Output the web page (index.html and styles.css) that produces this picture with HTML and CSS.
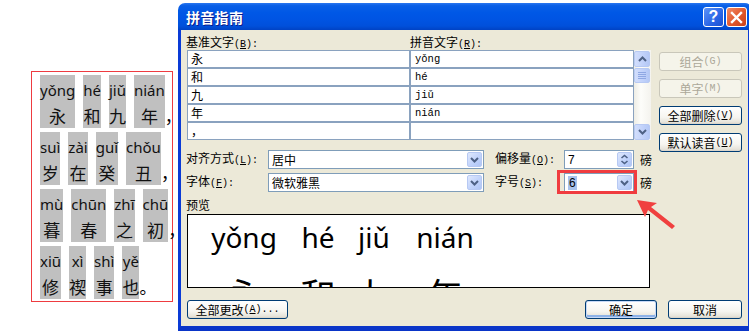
FILE: index.html
```html
<!DOCTYPE html>
<html lang="zh-CN">
<head>
<meta charset="utf-8">
<title>拼音指南</title>
<link rel="stylesheet" href="styles.css">
</head>
<body>
<div class="desk">
  <div class="docpane">
    <div class="doc">
      <div class="line">
        <span class="rb"><span class="py">yǒng</span><span class="hz">永</span></span>
        <span class="rb"><span class="py">hé</span><span class="hz">和</span></span>
        <span class="rb"><span class="py">jiǔ</span><span class="hz">九</span></span>
        <span class="rb"><span class="py">nián</span><span class="hz">年</span></span>
        <span class="pu">，</span>
      </div>
      <div class="line">
        <span class="rb"><span class="py">suì</span><span class="hz">岁</span></span>
        <span class="rb"><span class="py">zài</span><span class="hz">在</span></span>
        <span class="rb"><span class="py">guǐ</span><span class="hz">癸</span></span>
        <span class="rb"><span class="py">chǒu</span><span class="hz">丑</span></span>
        <span class="pu">，</span>
      </div>
      <div class="line">
        <span class="rb"><span class="py">mù</span><span class="hz">暮</span></span>
        <span class="rb"><span class="py">chūn</span><span class="hz">春</span></span>
        <span class="rb"><span class="py">zhī</span><span class="hz">之</span></span>
        <span class="rb"><span class="py">chū</span><span class="hz">初</span></span>
        <span class="pu">，</span>
      </div>
      <div class="line">
        <span class="rb"><span class="py">xiū</span><span class="hz">修</span></span>
        <span class="rb"><span class="py">xì</span><span class="hz">禊</span></span>
        <span class="rb"><span class="py">shì</span><span class="hz">事</span></span>
        <span class="rb"><span class="py">yě</span><span class="hz">也</span></span>
        <span class="pu">。</span>
      </div>
    </div>
  </div>

  <div class="win">
    <div class="titlebar">
      <span class="title">拼音指南</span>
      <span class="tbtns">
        <span class="tb help">?</span>
        <span class="tb close"><svg width="13" height="13" viewBox="0 0 13 13"><path d="M2 2 L11 11 M11 2 L2 11" stroke="#fff" stroke-width="2.4" stroke-linecap="square"/></svg></span>
      </span>
    </div>
    <div class="client">
      <div class="top">
        <div class="left">
          <div class="heads">
            <span class="h1">基准文字<span class="k">(<u>B</u>):</span></span>
            <span>拼音文字<span class="k">(<u>R</u>):</span></span>
          </div>
          <div class="list">
            <div class="grid">
              <div class="cell">永</div><div class="cell mono">yǒng</div>
              <div class="cell">和</div><div class="cell mono">hé</div>
              <div class="cell">九</div><div class="cell mono">jiǔ</div>
              <div class="cell">年</div><div class="cell mono">nián</div>
              <div class="cell">，</div><div class="cell mono"></div>
            </div>
            <div class="vs">
              <span class="sbtn"><svg width="9" height="6" viewBox="0 0 9 6"><path d="M1 5 L4.5 1.5 L8 5" fill="none" stroke="#4d6185" stroke-width="2"/></svg></span>
              <span class="sbtn thumb"><svg width="8" height="8" viewBox="0 0 8 8"><path d="M0 0.5 H8 M0 2.5 H8 M0 4.5 H8 M0 6.5 H8" stroke="#8ea7e3" stroke-width="1"/></svg></span>
              <span class="sfill"></span>
              <span class="sbtn"><svg width="9" height="6" viewBox="0 0 9 6"><path d="M1 1 L4.5 4.5 L8 1" fill="none" stroke="#4d6185" stroke-width="2"/></svg></span>
            </div>
          </div>
        </div>
        <div class="side">
          <span class="btn dis">组合<span class="k">(G)</span></span>
          <span class="btn dis">单字<span class="k">(M)</span></span>
          <span class="btn">全部删除<span class="k">(<u>V</u>)</span></span>
          <span class="btn">默认读音<span class="k">(<u>U</u>)</span></span>
        </div>
      </div>

      <div class="opts">
        <span class="lbl">对齐方式<span class="k">(<u>L</u>):</span></span>
        <span class="sel"><span>居中</span><span class="ddb"><svg width="9" height="6" viewBox="0 0 9 6"><path d="M1 1 L4.5 4.5 L8 1" fill="none" stroke="#4d6185" stroke-width="2"/></svg></span></span>
        <span class="lbl pad">偏移量<span class="k">(<u>O</u>):</span></span>
        <span class="sel num"><span>7</span><span class="ddb spin"><svg width="9" height="11" viewBox="0 0 9 11"><path d="M1.5 4 L4.5 1.5 L7.5 4 M1.5 7 L4.5 9.5 L7.5 7" fill="none" stroke="#4d6185" stroke-width="1.6"/></svg></span></span>
        <span class="unit">磅</span>

        <span class="lbl">字体<span class="k">(<u>F</u>):</span></span>
        <span class="sel"><span>微软雅黑</span><span class="ddb"><svg width="9" height="6" viewBox="0 0 9 6"><path d="M1 1 L4.5 4.5 L8 1" fill="none" stroke="#4d6185" stroke-width="2"/></svg></span></span>
        <span class="lbl pad">字号<span class="k">(<u>S</u>):</span></span>
        <span class="sel num mark"><span class="hl">6</span><span class="ddb"><svg width="9" height="6" viewBox="0 0 9 6"><path d="M1 1 L4.5 4.5 L8 1" fill="none" stroke="#4d6185" stroke-width="2"/></svg></span><span class="redbox"></span></span>
        <span class="unit">磅</span>
      </div>

      <div class="plabel">预览</div>
      <div class="preview">
        <div class="pc pc1"><span class="ppy">yǒng</span><span class="phz">永</span></div>
        <div class="pc pc2"><span class="ppy">hé</span><span class="phz">和</span></div>
        <div class="pc pc3"><span class="ppy">jiǔ</span><span class="phz">九</span></div>
        <div class="pc pc4"><span class="ppy">nián</span><span class="phz">年</span></div>
      </div>

      <div class="bottom">
        <span class="btn ball">全部更改<span class="k">(<u>A</u>)...</span></span>
        <span class="btn bok">确定</span>
        <span class="btn bcancel">取消</span>
      </div>
    </div>
  </div>

  <svg class="arrow" width="60" height="50" viewBox="0 0 60 50">
    <path d="M2 4 L22 7 L16 11 L40 30 L37 33 L13 14 L10 21 Z" fill="#f0403f"/>
  </svg>
</div>
</body>
</html>
```

FILE: styles.css
```css
* { box-sizing: border-box; margin: 0; padding: 0; }
html, body { width: 749px; height: 331px; overflow: hidden; background: #fff; }
body { font-family: "Noto Sans CJK SC", "Noto Sans", sans-serif; font-size: 12px; color: #000; }

.desk { display: flex; width: 749px; height: 331px; position: relative; }

/* document on the left */
.docpane { width: 178px; flex: none; padding: 71px 0 0 31px; }
.doc { width: 142px; height: 231px; border: 1px solid #ee3b40; padding: 3px 0 0 8px;
  display: flex; flex-direction: column; gap: 4px; }
.line { display: flex; align-items: flex-end; gap: 8px; }
.rb { display: flex; flex-direction: column; align-items: center; background: #c0c0c0;
  height: 53px; padding-top: 1px; }
.py { font-family: "Noto Sans", sans-serif; font-size: 15px; line-height: 28px; color: #111; white-space: nowrap; }
.hz { font-family: "Noto Sans CJK SC", sans-serif; font-size: 17px; line-height: 23px; color: #111; }
.pu { font-family: "Noto Sans CJK SC", sans-serif; font-size: 17px; line-height: 24px; margin-left: -8px; }

/* window */
.win { flex: none; width: 574px; height: 331px; padding-top: 3px; display: flex; flex-direction: column; }
.titlebar { height: 27px; flex: none; border-radius: 7px 7px 0 0;
  background: linear-gradient(to bottom, #2a77f0 0%, #0a5fe6 10%, #0058e6 35%, #0054e3 60%, #0050db 85%, #0042c4 100%);
  display: flex; align-items: center; justify-content: space-between; padding: 0 5px 0 8px; }
.title { color: #fff; font-weight: 700; font-size: 14px; letter-spacing: 0.3px; text-shadow: 1px 1px 0 #0a1e8c; line-height: 20px; }
.tbtns { display: flex; gap: 2px; padding-top: 1px; }
.tb { width: 21px; height: 20px; border: 1px solid #fff; border-radius: 3px; display: flex; align-items: center; justify-content: center; }
.help { background: linear-gradient(135deg, #5c93f8, #2a65e6 60%, #1c4fd0); color: #fff; font: 700 16px "Liberation Sans", sans-serif; }
.close { background: linear-gradient(135deg, #f08a66, #e2572c 55%, #c8401a); }

.client { flex: 1; background: #ece9d8; border-left: 3px solid #0a3bd6; border-right: 4px solid #0a3bd6;
  border-bottom: 5px solid #0a35c8; padding: 5px 6px 0 5px; display: flex; flex-direction: column; }

.k { font-family: "Liberation Mono", monospace; font-size: 10px; }

.top { display: flex; gap: 8px; height: 115px; flex: none; }
.left { width: 465px; display: flex; flex-direction: column; }
.heads { display: flex; height: 15px; line-height: 14px; }
.h1 { width: 224px; }
.list { display: flex; margin-left: 1px; }
.grid { display: grid; grid-template-columns: 223px 224px; grid-auto-rows: 18px; }
.cell { border: 1px solid #8aa2bf; background: #fff; padding-left: 3px; line-height: 16px; font-size: 12px; }
.cell.mono { font-family: "Liberation Mono", monospace; font-size: 10.5px; padding-left: 4px; }

.vs { width: 17px; height: 90px; display: flex; flex-direction: column; gap: 1px; padding: 1px 1px 0 0;
  background: linear-gradient(to right, #eeede5, #fdfdfa 40%, #f4f3ee); }
.sbtn { height: 16px; flex: none; border: 1px solid #b7c9f3; border-radius: 2px;
  background: linear-gradient(to right, #d2defb, #c3d3fb 50%, #b4c8f6); display: flex; align-items: center; justify-content: center; }
.thumb { height: 15px; }
.sfill { flex: 1; }

.side { width: 83px; display: flex; flex-direction: column; gap: 8px; padding-top: 17px; }
.btn { height: 19px; border: 1px solid #003c74; border-radius: 3px; display: flex; align-items: center; justify-content: center;
  background: linear-gradient(to bottom, #ffffff 0%, #f6f5f0 60%, #e6e3da 90%, #d6d0c5 100%); font-size: 12px; line-height: 17px; white-space: nowrap; }
.btn.dis { border-color: #c9c7ba; color: #aca899; background: #f5f4ea; }

.opts { display: grid; grid-template-columns: 82px 216px 80px 70px auto; grid-template-rows: 19px 19px; row-gap: 4px; align-items: center; flex: none; }
.lbl { line-height: 16px; }
.lbl.pad { padding-left: 11px; }
.sel { height: 19px; border: 1px solid #7f9db9; background: #fff; display: flex; align-items: center; justify-content: space-between; padding: 0 1px 0 3px; position: relative; }
.sel.num { font-family: "Liberation Sans", sans-serif; font-size: 12px; }
.ddb { width: 15px; height: 15px; border: 1px solid #b7c9f3; border-radius: 2px;
  background: linear-gradient(135deg, #dfe8fd, #c1d3fb 55%, #afc5f5); display: flex; align-items: center; justify-content: center; }
.spin { height: 15px; }
.hl { background: #a9c2ec; padding: 0 1px; line-height: 14px; }
.unit { padding-left: 6px; line-height: 16px; }
.redbox { position: absolute; left: -8px; top: -4px; width: 80px; height: 24px; border: 3px solid #f03c3f; pointer-events: none; }

.plabel { margin-top: 5px; height: 17px; line-height: 15px; flex: none; }
.preview { width: 463px; height: 74px; flex: none; margin-left: 1px; border: 1px solid #000; background: #fff; overflow: hidden;
  display: flex; align-items: flex-start; padding: 8px 0 0 24px; }
.pc { display: flex; flex-direction: column; align-items: center; flex: none; }
.pc1 { width: 64px; }
.pc2 { width: 36px; margin-left: 24px; }
.pc3 { width: 36px; margin-left: 20px; }
.pc4 { width: 54px; margin-left: 26px; }
.ppy { font-family: "Noto Sans", sans-serif; font-size: 28px; line-height: 28px; white-space: nowrap; color: #000; }
.phz { font-family: "Noto Sans CJK SC", sans-serif; font-size: 36px; line-height: 36px; margin-top: 25px; }

.bottom { display: flex; margin-top: 12px; flex: none; }
.ball { width: 101px; margin-left: 1px; }
.bok { width: 72px; margin-left: auto; box-shadow: inset 0 0 0 1px #c6d8f6, inset 0 -2px 0 1px #8db2e8; }
.bcancel { width: 74px; margin-left: 11px; }

.arrow { position: absolute; left: 635px; top: 196px; }
```
